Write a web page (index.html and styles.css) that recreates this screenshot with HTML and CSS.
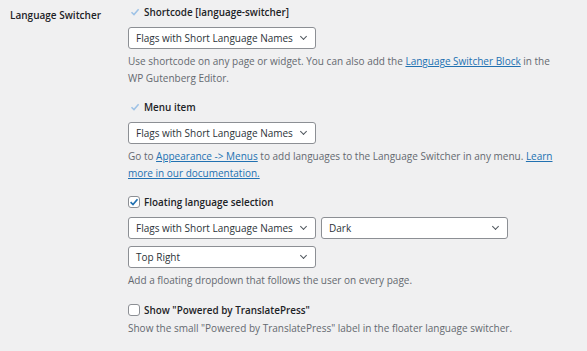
FILE: index.html
```html
<!DOCTYPE html>
<html>
<head>
<meta charset="utf-8">
<link rel="stylesheet" href="styles.css">
</head>
<body>
<div class="row">
  <div class="label">Language Switcher</div>
  <div class="content">
    <div class="opt first">
      <span class="tick"><svg width="10" height="10" viewBox="0 0 10 10"><path d="M1.5 5.2 L4 7.6 L8.6 2.2" fill="none" stroke="#9ec2e6" stroke-width="1.5"/></svg></span>
      <span class="opt-title">Shortcode [language-switcher]</span>
    </div>
    <div class="selects">
      <div class="select w187">Flags with Short Language Names<span class="chev"></span></div>
    </div>
    <p class="desc d1">Use shortcode on any page or widget. You can also add the <a href="#">Language Switcher Block</a> in the WP Gutenberg Editor.</p>

    <div class="opt second">
      <span class="tick"><svg width="10" height="10" viewBox="0 0 10 10"><path d="M1.5 5.2 L4 7.6 L8.6 2.2" fill="none" stroke="#9ec2e6" stroke-width="1.5"/></svg></span>
      <span class="opt-title">Menu item</span>
    </div>
    <div class="selects">
      <div class="select w187">Flags with Short Language Names<span class="chev"></span></div>
    </div>
    <p class="desc d2">Go to <a href="#">Appearance -&gt; Menus</a> to add languages to the Language Switcher in any menu. <a href="#">Learn more in our documentation.</a></p>

    <div class="opt third">
      <span class="box checked"><svg width="10" height="10" viewBox="0 0 10 10"><path d="M1.6 5.2 L4 7.6 L8.5 2.3" fill="none" stroke="#2271b1" stroke-width="1.7"/></svg></span>
      <span class="opt-title">Floating language selection</span>
    </div>
    <div class="selects">
      <div class="select w187">Flags with Short Language Names<span class="chev"></span></div>
      <div class="select w186">Dark<span class="chev"></span></div>
    </div>
    <div class="selects s2">
      <div class="select w187">Top Right<span class="chev"></span></div>
    </div>
    <p class="desc d3">Add a floating dropdown that follows the user on every page.</p>

    <div class="opt fourth">
      <span class="box"></span>
      <span class="opt-title">Show "Powered by TranslatePress"</span>
    </div>
    <p class="desc d4">Show the small "Powered by TranslatePress" label in the floater language switcher.</p>
  </div>
</div>
</body>
</html>
```
FILE: styles.css
```css
html, body {
  margin: 0;
  padding: 0;
  background: #f0f0f1;
  width: 587px;
  height: 351px;
  overflow: hidden;
}
body {
  font-family: "Open Sans", "Noto Sans", sans-serif;
  font-size: 10px;
  color: #1d2327;
}
.row {
  display: flex;
  padding-top: 4px;
}
.label {
  width: 118px;
  padding-left: 10px;
  font-weight: 600;
  font-size: 10px;
  line-height: 16px;
  padding-top: 3px;
  color: #1d2327;
}
.content {
  width: 438px;
  display: flex;
  flex-direction: column;
}
.opt {
  display: flex;
  align-items: center;
  height: 16px;
  line-height: 16px;
}
.opt.second { margin-top: 13px; }
.opt.third { margin-top: 13px; }
.opt.fourth { margin-top: 13px; }
.opt-title {
  font-weight: 600;
  font-size: 9.9px;
  color: #1d2327;
}
.tick {
  width: 12px;
  height: 12px;
  margin-left: 1px;
  margin-right: 3px;
  display: flex;
  align-items: center;
  justify-content: center;
}
.box {
  box-sizing: border-box;
  width: 12px;
  height: 12px;
  border: 1px solid #8c8f94;
  border-radius: 3px;
  background: #fff;
  margin-right: 4px;
  display: flex;
  align-items: center;
  justify-content: center;
}
.selects {
  display: flex;
  gap: 5px;
  margin-top: 7px;
}
.selects.s2 { margin-top: 7px; }
.select {
  box-sizing: border-box;
  height: 22px;
  border: 1px solid #8c8f94;
  border-radius: 3px;
  background: #fff;
  color: #2c3338;
  font-size: 10px;
  line-height: 20px;
  padding-left: 7px;
  position: relative;
  white-space: nowrap;
}
.w187 { width: 188px; }
.w186 { width: 187px; }
.chev {
  position: absolute;
  right: 9px;
  top: 6px;
  width: 4px;
  height: 4px;
  border-right: 1.5px solid #50575e;
  border-bottom: 1.5px solid #50575e;
  transform: rotate(45deg);
}
.desc {
  margin: 4px 0 0 0;
  color: #646970;
  font-size: 10px;
  line-height: 16.5px;
  width: 438px;
}
.desc.d4 { margin-top: 2px; }
.desc a {
  color: #2271b1;
  text-decoration: underline;
}
```
